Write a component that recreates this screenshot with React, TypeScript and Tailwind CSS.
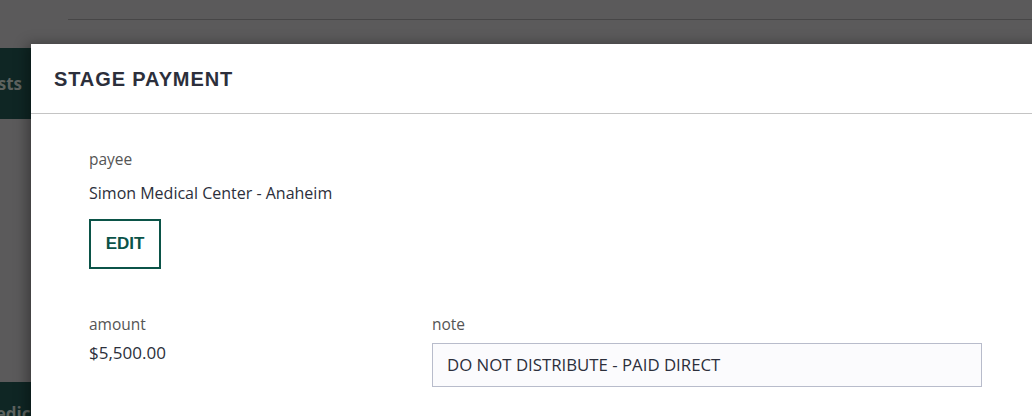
import React from 'react';

const font = { fontFamily: '"Open Sans", "Liberation Sans", sans-serif' };

function Backdrop() {
    return (
        <div className="flex h-full w-full bg-[#5b5a5b]">
            <div className="flex w-[68px] shrink-0 flex-col">
                <div className="h-[48px] shrink-0" />
                <div className="flex h-[71px] shrink-0 items-center justify-end overflow-hidden bg-[#0f2624] pr-[46px]">
                    <span className="whitespace-nowrap text-[17px] font-bold text-[#5d625f]">Requests</span>
                </div>
                <div className="h-[263px] shrink-0" />
                <div className="flex h-[60px] shrink-0 items-start justify-end overflow-hidden bg-[#0f2624] pr-[22px] pt-[19px]">
                    <span className="whitespace-nowrap text-[17px] font-bold text-[#5d625f]">Medical</span>
                </div>
            </div>
            <div className="flex-1">
                <div className="h-[19px]" />
                <div className="h-px bg-[#474647]" />
            </div>
        </div>
    );
}

export default function App() {
    return (
        <div className="relative h-[416px] w-[1032px] overflow-hidden" style={font}>
            <Backdrop />

            <div className="absolute left-[31px] top-[44px] h-[400px] w-[1040px] bg-white shadow-[-4px_0_12px_rgba(0,0,0,0.35)]">
                <div className="flex h-[70px] items-center border-b border-[#c4c4c4] pl-[23px]">
                    <h2
                        className="text-[20px] font-bold tracking-[0.045em] text-[#2c2f3b]"
                        style={{ fontFamily: '"Liberation Sans", Arial, sans-serif' }}
                    >
                        STAGE PAYMENT
                    </h2>
                </div>

                <div className="pl-[58px] pt-[35px]">
                    <div className="text-[15.5px] leading-[20px] text-[#555555]">payee</div>
                    <div className="mt-[14px] text-[16px] leading-[20px] text-[#2c2f3b]">Simon Medical Center - Anaheim</div>
                    <button
                        className="mt-[16px] flex h-[50px] w-[72px] items-center justify-center border-2 border-[#0b5348] text-[17px] font-bold text-[#0b5348]"
                        style={{ fontFamily: '"Liberation Sans", Arial, sans-serif' }}
                    >
                        EDIT
                    </button>

                    <div className="mt-[45px] flex">
                        <div className="w-[343px]">
                            <div className="text-[15.5px] leading-[20px] text-[#555555]">amount</div>
                            <div className="mt-[9px] text-[17px] leading-[20px] text-[#2c2f3b]">$5,500.00</div>
                        </div>
                        <div>
                            <div className="text-[15.5px] leading-[20px] text-[#555555]">note</div>
                            <div className="mt-[9px] flex h-[44px] w-[550px] items-center border border-[#b8bccb] bg-[#fbfbfd] px-[14px] text-[16.8px] text-[#2c2f3b]">
                                DO NOT DISTRIBUTE - PAID DIRECT
                            </div>
                        </div>
                    </div>
                </div>
            </div>
        </div>
    );
}
